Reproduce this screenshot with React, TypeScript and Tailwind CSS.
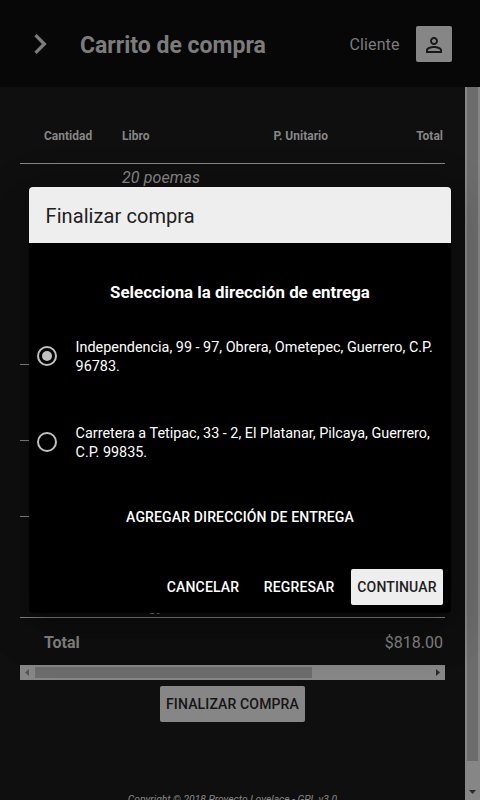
import React from "react";

const rows = [
  { title: "20 poemas", top: "h-[201px]" },
  { title: "", top: "h-[76px]" },
  { title: "", top: "h-[76px]" },
];

function Header() {
  return (
    <header className="flex h-[87px] shrink-0 items-center bg-[#070707] pl-[20px] pr-[28px] text-[#7c7c7c]">
      <svg className="h-10 w-10" viewBox="0 0 24 24" fill="currentColor">
        <path d="M10 6L8.59 7.41 13.17 12l-4.58 4.59L10 18l6-6z" />
      </svg>
      <h1 className="ml-[20px] mt-[4px] text-[23px] leading-8 font-bold whitespace-nowrap">Carrito de compra</h1>
      <span className="mt-[2px] ml-auto mr-[16.5px] text-[16px] leading-6 tracking-[0.1px]">Cliente</span>
      <button className="mt-[1px] flex h-9 w-9 items-center justify-center rounded-[2px] bg-[#868686] text-[#171717]">
        <svg className="h-6 w-6 translate-y-[1px]" viewBox="0 0 24 24" fill="currentColor">
          <path d="M12 5.9a2.1 2.1 0 1 1 0 4.2 2.1 2.1 0 0 1 0-4.2m0 9c2.97 0 6.1 1.46 6.1 2.1v1.1H5.9V17c0-.64 3.13-2.1 6.1-2.1M12 4C9.79 4 8 5.79 8 8s1.79 4 4 4 4-1.790 4-4-1.790-4-4-4zm0 9c-2.670 0-8 1.340-8 4v3h16v-3c0-2.660-5.330-4-8-4z" />
        </svg>
      </button>
    </header>
  );
}

function CartTable() {
  return (
    <div className="flex flex-col">
      <div className="flex h-[56px] items-center border-b border-[#868686] pl-[24px] pr-[2px] text-[12px] font-bold">
        <span className="w-[78px]">Cantidad</span>
        <span className="w-[120px]">Libro</span>
        <span className="w-[86px] text-right">P. Unitario</span>
        <span className="flex-1 text-right">Total</span>
      </div>
      {rows.map((row, i) => (
        <div key={i} className={`${row.top} border-b border-[#868686] pl-[102px] pt-[3px] text-[16px] leading-[21px] tracking-[0.1px] italic`}>
          {row.title}
        </div>
      ))}
      <div className="flex h-[101px] items-end border-b border-[#868686] pl-[129px] text-[16px] leading-[21px] italic">
        <span className="mb-[1px]">gy</span>
      </div>
      <div className="flex h-[47px] items-center justify-between pl-[24px] pr-[2px] pt-[2px] text-[16px]">
        <b>Total</b>
        <span>$818.00</span>
      </div>
      <div className="flex h-[15px] items-center bg-[#868686]">
        <div className="flex w-[15px] pl-[5px]">
          <svg className="h-[7px] w-[4px]" viewBox="0 0 4 7"><path d="M4 0v7L0 3.500z" fill="#555" /></svg>
        </div>
        <div className="h-[11px] w-[277px] bg-[#6c6c6c]" />
        <div className="ml-auto flex w-[15px] justify-center">
          <svg className="h-[7px] w-[4px]" viewBox="0 0 4 7"><path d="M0 0v7l4-3.500z" fill="#2a2a2a" /></svg>
        </div>
      </div>
    </div>
  );
}

function Radio({ checked }: { checked: boolean }) {
  return (
    <span className="mb-[2px] flex h-5 w-5 shrink-0 items-center justify-center rounded-full border-2 border-[#c0c0c0]">
      {checked && <span className="h-[10px] w-[10px] rounded-full bg-[#c0c0c0]" />}
    </span>
  );
}

function CheckoutDialog() {
  return (
    <div
      role="dialog"
      className="absolute top-[187px] left-[29px] flex h-[426px] w-[422px] flex-col overflow-hidden rounded-[4px] bg-black text-white shadow-[0_11px_15px_-7px_rgba(0,0,0,0.2),0_24px_38px_3px_rgba(0,0,0,0.14),0_9px_46px_8px_rgba(0,0,0,0.12)]"
    >
      <h2 className="flex h-[56px] items-center bg-[#eeeeee] pt-[2px] pl-[16.5px] text-[20px] tracking-[0.08px] text-[#212121]">
        Finalizar compra
      </h2>
      <h3 className="mt-[37px] mb-[1px] text-center text-[16.85px] leading-6 font-bold">Selecciona la dirección de entrega</h3>
      <label className="mt-[33px] flex h-[38px] items-center pl-[8px]">
        <Radio checked={true} />
        <span className="ml-[18.6px] text-[14.4px] leading-[19px] whitespace-nowrap">
          Independencia, 99 - 97, Obrera, Ometepec, Guerrero, C.P.
          <br />
          96783.
        </span>
      </label>
      <label className="mt-[48px] flex h-[38px] items-center pl-[8px]">
        <Radio checked={false} />
        <span className="ml-[18.6px] text-[14.4px] leading-[19px] whitespace-nowrap">
          Carretera a Tetipac, 33 - 2, El Platanar, Pilcaya, Guerrero,
          <br />
          C.P. 99835.
        </span>
      </label>
      <div className="mt-[37px] flex h-9 items-center justify-center text-[14px] font-medium tracking-[0.14px]">
        AGREGAR DIRECCIÓN DE ENTREGA
      </div>
      <div className="mt-[34px] flex justify-end pr-[8px] text-[14px] font-medium tracking-[0.14px]">
        <button className="mr-[12.7px] h-9 px-[6px]">CANCELAR</button>
        <button className="mr-[10.5px] h-9 px-[6px]">REGRESAR</button>
        <button className="h-9 w-[92px] rounded-[2px] bg-[#eeeeee] text-center text-[#212121]">CONTINUAR</button>
      </div>
    </div>
  );
}

export default function App() {
  return (
    <div className="relative flex h-[800px] w-[480px] flex-col overflow-hidden bg-[#0f0f0f] font-['Roboto',sans-serif] text-[#868686]">
      <Header />
      <div className="flex min-h-0 flex-1">
        <main className="flex flex-1 flex-col overflow-hidden px-[20px] pt-[21px]">
          <CartTable />
          <button className="mt-[6px] h-9 w-[145px] shrink-0 self-center rounded-[2px] bg-[#868686] text-[14px] font-medium tracking-[0.14px] whitespace-nowrap text-[#151515]">
            FINALIZAR COMPRA
          </button>
          <footer className="mt-[71px] shrink-0 text-center text-[10.3px] leading-[14px] italic">
            Copyright © 2018 Proyecto Lovelace - GPL v3.0
          </footer>
        </main>
        <div className="flex w-[15px] flex-col items-center bg-[#868686]">
          <div className="h-[674px] w-[11px] bg-[#6c6c6c]" />
          <svg className="mt-[29px] h-[4px] w-[7px]" viewBox="0 0 7 4"><path d="M0 0h7L3.500 4z" fill="#2a2a2a" /></svg>
        </div>
      </div>
      <CheckoutDialog />
    </div>
  );
}
